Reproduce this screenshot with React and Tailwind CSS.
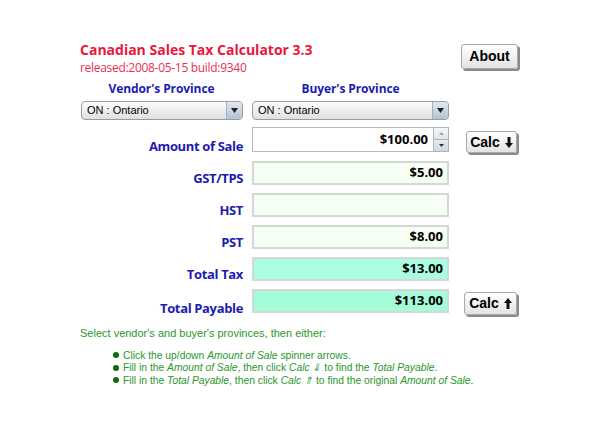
import React from "react";

// Canadian sales tax calculator panel

const ui = "font-['Open_Sans',sans-serif]";
const arial = "font-['Liberation_Sans',Arial,sans-serif]";

const Arrow = ({ up }) => (
  <svg width="8" height="11" viewBox="0 0 8 11" className={up ? "rotate-180" : ""}>
    <path d="M2.5 0h3v6H8L4 11 0 6h2.5z" fill="#111" />
  </svg>
);

const Button = ({ children, className = "" }) => (
  <button
    className={`flex items-center justify-center gap-[5px] rounded-[3px] border border-[#a9a9a9] bg-linear-to-b from-white to-[#e3e3e3] shadow-[2px_2px_0_#8a8a8a] text-[14px] font-bold text-black ${arial} ${className}`}
  >
    {children}
  </button>
);

const Select = () => (
  <div className="flex h-[19px] items-stretch rounded-[4px] border border-[#9c9c9c] bg-linear-to-b from-[#fdfdfd] to-[#e0e0e0]">
    <span className={`flex-1 pl-[5px] text-[11px] leading-[17px] text-black ${arial}`}>
      ON : Ontario
    </span>
    <span className="flex w-[16px] items-center justify-center rounded-r-[3px] border-l border-[#9fb0c0] bg-linear-to-b from-[#dfe8f0] to-[#b3c3d2]">
      <svg width="7" height="5" viewBox="0 0 7 5">
        <path d="M0 0h7L3.5 5z" fill="#222" />
      </svg>
    </span>
  </div>
);

const Field = ({ value, bg = "bg-[#f5fff4]" }) => (
  <div
    className={`flex h-[24px] items-center justify-end border-2 border-[#d6d6d6] pr-[4px] text-[13px] font-bold text-black ${bg} ${ui}`}
  >
    {value}
  </div>
);

const Label = ({ children }) => (
  <div
    className={`flex items-end justify-end pb-0 text-[13px] leading-none font-bold tracking-[-0.35px] text-[#1b1bb0] ${ui}`}
  >
    {children}
  </div>
);

const rows = [
  { label: "GST/TPS", value: "$5.00" },
  { label: "HST", value: "" },
  { label: "PST", value: "$8.00" },
  { label: "Total Tax", value: "$13.00", bg: "bg-[#abfde0]" },
];

export default function App() {
  return (
    <div className="min-h-[436px] w-[600px] bg-white pt-[40px] pl-[80px]">
      <div className="flex w-[438px] items-start">
        <div className={ui}>
          <div className="text-[14px] leading-[20px] font-bold text-[#e8173c]">
            Canadian Sales Tax Calculator 3.3
          </div>
          <div className="text-[12px] leading-[16px] tracking-[-0.3px] text-[#ea2f55]">
            released:2008-05-15 build:9340
          </div>
        </div>
        <Button className="mt-[4px] ml-auto h-[25px] w-[57px]">About</Button>
      </div>

      <div className="mt-[4px] grid grid-cols-[163px_197px_53px] gap-x-[9px]">
        <div className={`text-center text-[12px] leading-[18px] font-bold tracking-[-0.1px] text-[#1b1bb0] ${ui}`}>
          Vendor's Province
        </div>
        <div className={`text-center text-[12px] leading-[18px] font-bold tracking-[-0.1px] text-[#1b1bb0] ${ui}`}>
          Buyer's Province
        </div>
        <div />
      </div>

      <div className="mt-[3px] grid grid-cols-[163px_197px_53px] gap-x-[9px]">
        <div className="pl-[1px]">
          <Select />
        </div>
        <Select />
        <div />
      </div>

      <div className="mt-[7px] grid grid-cols-[163px_197px_60px] gap-x-[9px] gap-y-[8px]">
        <Label>Amount of Sale</Label>
        <div className="flex h-[25px]">
          <div
            className={`flex flex-1 items-center justify-end border border-[#b9b9b9] bg-white pr-[5px] text-[13px] font-bold text-black ${ui}`}
          >
            $100.00
          </div>
          <div className="flex w-[15px] flex-col border border-l-0 border-[#a9b6c2]">
            <span className="flex flex-1 items-center justify-center bg-linear-to-b from-[#f4f6f8] to-[#dfe5eb]">
              <svg width="5" height="3" viewBox="0 0 5 3">
                <path d="M0 3h5L2.5 0z" fill="#9aa4ae" />
              </svg>
            </span>
            <span className="flex flex-1 items-center justify-center border-t border-[#a9b6c2] bg-linear-to-b from-[#e6ebf0] to-[#cfd8e1]">
              <svg width="5" height="3" viewBox="0 0 5 3">
                <path d="M0 0h5L2.5 3z" fill="#333" />
              </svg>
            </span>
          </div>
        </div>
        <div className="flex items-start pt-[4px] pl-[8px]">
          <Button className="h-[22px] w-[51px]">
            Calc <Arrow />
          </Button>
        </div>

        {rows.map((r) => (
          <React.Fragment key={r.label}>
            <Label>{r.label}</Label>
            <Field value={r.value} bg={r.bg} />
            <div />
          </React.Fragment>
        ))}

        <Label>Total Payable</Label>
        <Field value="$113.00" bg="bg-[#a4fcd8]" />
        <div className="flex items-start pt-[3px] pl-[6px]">
          <Button className="h-[23px] w-[53px]">
            Calc <Arrow up />
          </Button>
        </div>
      </div>

      <div className={`mt-[12px] text-[11px] leading-[13px] text-[#2b962b] ${arial}`}>
        <p>Select vendor's and buyer's provinces, then either:</p>
        <ul className="mt-[9px] flex flex-col pl-[33px] text-[10.3px]">
          {[
            <>
              Click the up/down <i>Amount of Sale</i> spinner arrows.
            </>,
            <>
              Fill in the <i>Amount of Sale</i>, then click <i>Calc ⇓</i> to find the <i>Total Payable</i>.
            </>,
            <>
              Fill in the <i>Total Payable</i>, then click <i>Calc ⇑</i> to find the original{" "}
              <i>Amount of Sale</i>.
            </>,
          ].map((t, i) => (
            <li key={i} className="flex h-[12.5px] items-center gap-[4px]">
              <span className="h-[6px] w-[6px] rounded-full bg-[#0d6b0d]" />
              <span>{t}</span>
            </li>
          ))}
        </ul>
      </div>
    </div>
  );
}
